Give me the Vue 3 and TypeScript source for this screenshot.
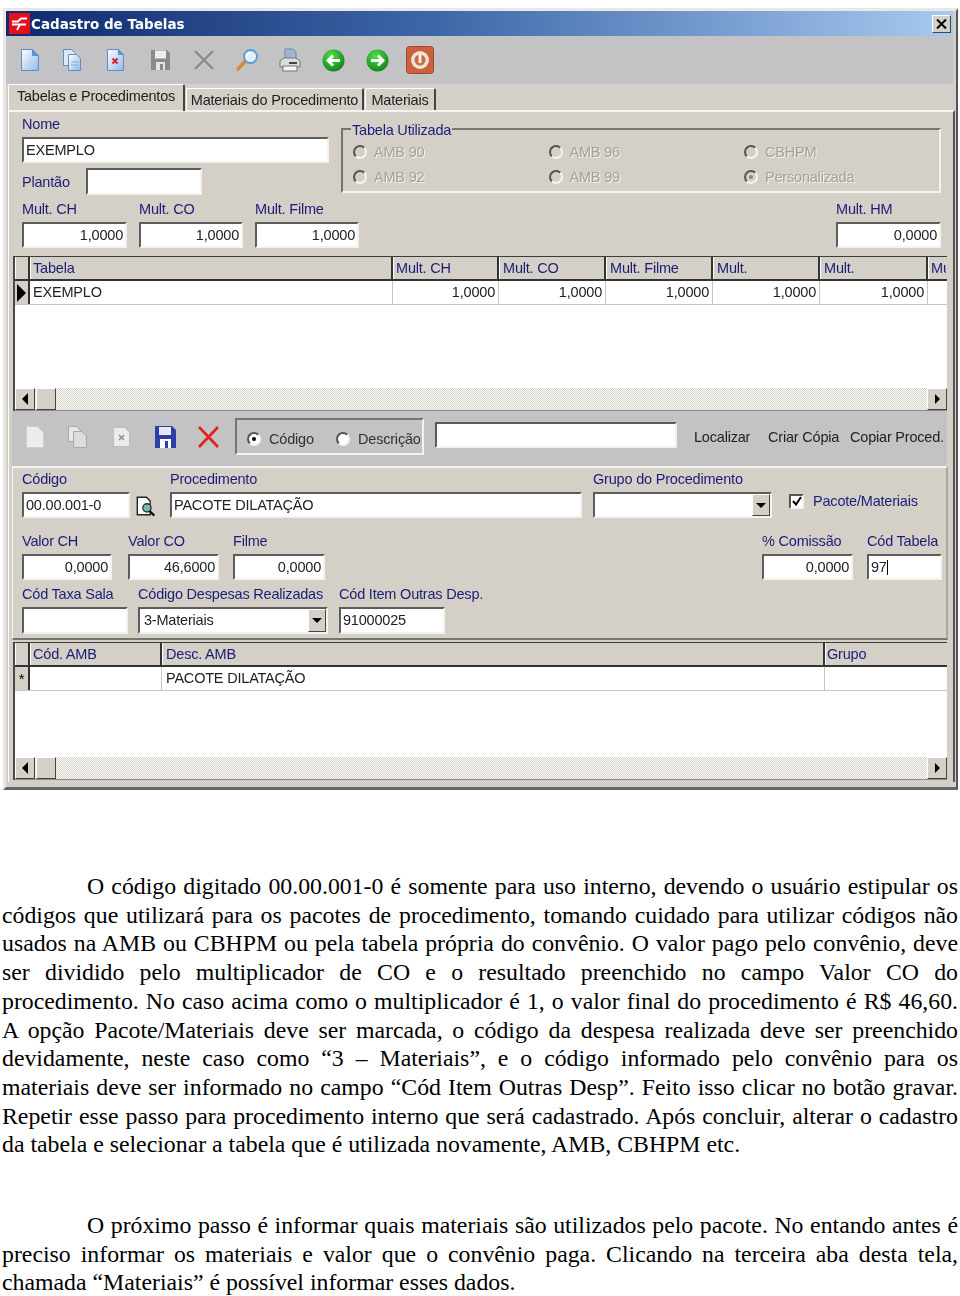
<script setup lang="ts">
// data for the two grids and the manual text below the window
const multCols = ["Mult. CH", "Mult. CO", "Mult. Filme", "Mult.", "Mult."];

const radios = [
  { label: "AMB 90", on: false },
  { label: "AMB 96", on: false },
  { label: "CBHPM", on: false },
  { label: "AMB 92", on: false },
  { label: "AMB 99", on: false },
  { label: "Personalizada", on: true },
];

const firstParagraph = [
  "O código digitado 00.00.001-0 é somente para uso interno, devendo o usuário estipular os",
  "códigos que utilizará para os pacotes de procedimento, tomando cuidado para utilizar códigos não",
  "usados na AMB ou CBHPM ou pela tabela própria do convênio. O valor pago pelo convênio, deve",
  "ser dividido pelo multiplicador de CO e o resultado preenchido no campo Valor CO do",
  "procedimento. No caso acima como o multiplicador é 1, o valor final do procedimento é R$ 46,60.",
  "A opção Pacote/Materiais deve ser marcada, o código da despesa realizada deve ser preenchido",
  "devidamente, neste caso como “3 – Materiais”, e o código informado pelo convênio para os",
  "materiais deve ser informado no campo “Cód Item Outras Desp”. Feito isso clicar no botão gravar.",
  "Repetir esse passo para procedimento interno que será cadastrado. Após concluir, alterar o cadastro",
  "da tabela e selecionar a tabela que é utilizada novamente, AMB, CBHPM etc.",
];

const secondParagraph = [
  "O próximo passo é informar quais materiais são utilizados pelo pacote. No entando antes é",
  "preciso informar os materiais e valor que o convênio paga. Clicando na terceira aba desta tela,",
  "chamada “Materiais” é possível informar esses dados.",
];
</script>

<template>
  <div class="page">
    <div class="window">
      <div class="titlebar">
        <span class="app-icon">
          <svg width="21" height="21" viewBox="0 0 21 21">
            <rect width="21" height="21" fill="#e0101c" />
            <path d="M3 8.5h6l3-3h6M3 11.5h14M8 17l3-5.500" fill="none" stroke="#fff" stroke-width="1.800" />
          </svg>
        </span>
        <span class="title">Cadastro de Tabelas</span>
        <span class="close">
          <svg width="11" height="10" viewBox="0 0 11 10"><path d="M1 .5l9 9M10 .5l-9 9" stroke="#000" stroke-width="2" /></svg>
        </span>
      </div>

      <div class="toolbar top-tools">
        <svg class="ic i1" width="20" height="24" viewBox="0 0 20 24">
          <defs>
            <linearGradient id="pg" x1="0" y1="0" x2="1" y2="1"><stop offset="0" stop-color="#fff" /><stop offset="1" stop-color="#8fb8ea" /></linearGradient>
          </defs>
          <path d="M1.500 1.500h11l6 6v15h-17z" fill="url(#pg)" stroke="#5f8ccb" />
          <path d="M12.500 1.500v6h6" fill="#5d93d8" stroke="#5f8ccb" />
        </svg>
        <svg class="ic i2" width="20" height="24" viewBox="0 0 20 24">
          <path d="M1.500 1.500h8l4 4v12h-12z" fill="#dbe8f8" stroke="#5f8ccb" />
          <path d="M6.500 6.500h8l4 4v12h-12z" fill="url(#pg)" stroke="#5f8ccb" />
          <path d="M9 14h7M9 17h7" stroke="#88a9d6" />
        </svg>
        <svg class="ic i3" width="19" height="24" viewBox="0 0 19 24">
          <path d="M1.500 1.500h11l5 5v16h-16z" fill="url(#pg)" stroke="#5f8ccb" />
          <path d="M12.500 1.500v5h5" fill="#5d93d8" stroke="#5f8ccb" />
          <path d="M6.500 10.500l5 5M11.500 10.500l-5 5" stroke="#d8202c" stroke-width="2" />
        </svg>
        <svg class="ic i4" width="21" height="22" viewBox="0 0 21 22">
          <path d="M1 1h16l3 3v17H1z" fill="#8a8a8c" />
          <rect x="5" y="1.500" width="11" height="8" fill="#ececec" />
          <rect x="6" y="13" width="9" height="8" fill="#e4e4e4" />
          <rect x="10" y="15" width="3" height="6" fill="#8a8a8c" />
        </svg>
        <svg class="ic i5" width="22" height="22" viewBox="0 0 22 22">
          <path d="M2 2l18 18M20 2L2 20" stroke="#8b8b8d" stroke-width="2.400" />
        </svg>
        <svg class="ic i6" width="24" height="24" viewBox="0 0 24 24">
          <path d="M3 21l7-7.500" stroke="#d98a32" stroke-width="3.500" stroke-linecap="round" />
          <circle cx="15.500" cy="8.500" r="6.500" fill="#dff0fb" stroke="#5a9ad6" stroke-width="1.800" />
          <path d="M12 8.500a3.500 3.500 0 0 1 3.500-3.500" stroke="#fff" stroke-width="2" fill="none" />
        </svg>
        <svg class="ic i7" width="22" height="24" viewBox="0 0 22 24">
          <path d="M6 1h8l3 3v8H6z" fill="#9fb6d3" stroke="#74879e" />
          <path d="M1 13l4-3h12l4 3v6H1z" fill="#dcdcde" stroke="#77777b" />
          <rect x="4" y="18" width="14" height="5" fill="#f5f5f5" stroke="#77777b" />
          <rect x="10" y="14" width="8" height="2" fill="#444" />
        </svg>
        <svg class="ic i8" width="23" height="23" viewBox="0 0 23 23">
          <defs>
            <radialGradient id="gr" cx=".4" cy=".3" r=".8"><stop offset="0" stop-color="#4fe04a" /><stop offset="1" stop-color="#0a7a12" /></radialGradient>
          </defs>
          <circle cx="11.500" cy="11.500" r="11" fill="url(#gr)" />
          <path d="M18 11.500H6.500M11 6.500l-5 5 5 5" fill="none" stroke="#fff" stroke-width="2.800" />
        </svg>
        <svg class="ic i9" width="23" height="23" viewBox="0 0 23 23">
          <circle cx="11.500" cy="11.500" r="11" fill="url(#gr)" />
          <path d="M5 11.500h11.500M12 6.500l5 5-5 5" fill="none" stroke="#fff" stroke-width="2.800" />
        </svg>
        <svg class="ic i10" width="28" height="28" viewBox="0 0 28 28">
          <rect x=".5" y=".5" width="27" height="27" rx="3" fill="#c9623a" stroke="#9a4a2c" />
          <circle cx="14" cy="14" r="9" fill="#f0e3da" />
          <circle cx="14" cy="14" r="5.500" fill="#cf6a3f" />
          <rect x="12.500" y="8" width="3" height="9" fill="#f6efe9" />
        </svg>
      </div>

      <div class="tabs">
        <span class="tab active">Tabelas e Procedimentos</span>
        <span class="tab t2">Materiais do Procedimento</span>
        <span class="tab t3">Materiais</span>
      </div>

      <div class="tab-page">
        <section class="form-top">
          <div class="top-block">
            <div class="name-col">
              <div class="field">
                <span class="lbl">Nome</span>
                <span class="input w307">EXEMPLO</span>
              </div>
              <div class="plantao">
                <span class="lbl plantao-lbl">Plantão</span>
                <span class="input w116 tall"></span>
              </div>
            </div>
            <div class="group">
              <span class="legend">Tabela Utilizada</span>
              <div v-for="r in radios" :key="r.label" class="radio-item">
                <span class="radio" :class="{ dot: r.on }"></span>
                <span class="disabled">{{ r.label }}</span>
              </div>
            </div>
          </div>
          <div class="row">
            <div class="field"><span class="lbl">Mult. CH</span><span class="input num w105">1,0000</span></div>
            <div class="field m-co"><span class="lbl">Mult. CO</span><span class="input num w104">1,0000</span></div>
            <div class="field m-film"><span class="lbl">Mult. Filme</span><span class="input num w104">1,0000</span></div>
            <div class="field push"><span class="lbl">Mult. HM</span><span class="input num w105">0,0000</span></div>
          </div>
        </section>

        <section class="grid grid-one">
          <div class="grid-row head">
            <span class="cell ind"></span>
            <span class="cell name">Tabela</span>
            <span v-for="(c, i) in multCols" :key="i" class="cell col" :class="'c' + i">{{ c }}</span>
            <span class="cell last">Mult.</span>
          </div>
          <div class="grid-row body">
            <span class="cell ind"><i class="arrow"></i></span>
            <span class="cell name">EXEMPLO</span>
            <span v-for="(c, i) in multCols" :key="i" class="cell col right" :class="'c' + i">1,0000</span>
            <span class="cell last"></span>
          </div>
          <div class="grid-fill"></div>
          <div class="scroll">
            <span class="sbtn"><i class="tri left"></i></span>
            <span class="thumb"></span>
            <span class="track"></span>
            <span class="sbtn end"><i class="tri right"></i></span>
          </div>
        </section>

        <div class="toolbar tools-two">
          <svg class="ic d1" width="18" height="22" viewBox="0 0 18 22">
            <path d="M.5.500h11l6 6v15H.5z" fill="#ececec" stroke="#cfcfcf" />
          </svg>
          <svg class="ic d2" width="19" height="22" viewBox="0 0 19 22">
            <path d="M.5.500h8l4 4v11H.5z" fill="#e8e8e8" stroke="#a8a8a8" />
            <path d="M5.500 5.500h8l5 4v12h-13z" fill="#dcdcdc" stroke="#a8a8a8" />
          </svg>
          <svg class="ic d3" width="17" height="20" viewBox="0 0 17 20">
            <path d="M.5.500h11l5 5v14H.5z" fill="#ececec" stroke="#bcbcbc" />
            <path d="M6 8l5 5M11 8l-5 5" stroke="#8c8c8c" stroke-width="1.500" />
          </svg>
          <svg class="ic d4" width="21" height="22" viewBox="0 0 21 22">
            <path d="M0 0h17l4 4v18H0z" fill="#2c3fa8" />
            <rect x="4" y="1" width="12" height="8" fill="#e8e8f2" />
            <rect x="5" y="13" width="11" height="9" fill="#fff" />
            <rect x="10" y="15" width="3" height="7" fill="#2c3fa8" />
          </svg>
          <svg class="ic d5" width="23" height="22" viewBox="0 0 23 22">
            <path d="M2 1l19 20M21 1L2 21" stroke="#e2201c" stroke-width="2.600" />
          </svg>
          <div class="search-by">
            <span class="radio white dot black"></span><span class="by b1">Código</span>
            <span class="radio white"></span><span class="by">Descrição</span>
          </div>
          <span class="input find"></span>
          <span class="tool-link l1">Localizar</span>
          <span class="tool-link l2">Criar Cópia</span>
          <span class="tool-link l3">Copiar Proced.</span>
        </div>

        <section class="form-low">
          <div class="row">
            <div class="field"><span class="lbl">Código</span><span class="input w108">00.00.001-0</span></div>
            <svg class="lookup" width="22" height="22" viewBox="0 0 24 24">
              <path d="M2.500 2.500h10l4 4v15h-14z" fill="#fff" stroke="#222" stroke-width="1.500" />
              <circle cx="13" cy="14" r="4.500" fill="#7fb7b0" stroke="#1c3c3c" stroke-width="1.500" />
              <path d="M16 17.500l5 5" stroke="#111" stroke-width="2.500" />
            </svg>
            <div class="field proc"><span class="lbl">Procedimento</span><span class="input w412">PACOTE DILATAÇÃO</span></div>
            <div class="field grp">
              <span class="lbl">Grupo do Procedimento</span>
              <span class="input select w179"><span class="drop"><i class="tri down"></i></span></span>
            </div>
            <div class="check-wrap">
              <span class="check">
                <svg width="10" height="10" viewBox="0 0 10 10"><path d="M1 5l3 3.500L9 1" fill="none" stroke="#000" stroke-width="2" /></svg>
              </span>
              <span class="lbl inline">Pacote/Materiais</span>
            </div>
          </div>
          <div class="row low-two">
            <div class="field"><span class="lbl">Valor CH</span><span class="input num w90">0,0000</span></div>
            <div class="field f-co"><span class="lbl">Valor CO</span><span class="input num w91">46,6000</span></div>
            <div class="field f-film"><span class="lbl">Filme</span><span class="input num w92">0,0000</span></div>
            <div class="field push"><span class="lbl">% Comissão</span><span class="input num w91">0,0000</span></div>
            <div class="field f-tab"><span class="lbl">Cód Tabela</span><span class="input w75">97<i class="caret"></i></span></div>
          </div>
          <div class="row low-three">
            <div class="field"><span class="lbl">Cód Taxa Sala</span><span class="input w106 tall"></span></div>
            <div class="field f-desp">
              <span class="lbl">Código Despesas Realizadas</span>
              <span class="input select w190 tall">3-Materiais<span class="drop"><i class="tri down"></i></span></span>
            </div>
            <div class="field f-item"><span class="lbl">Cód Item Outras Desp.</span><span class="input w106 tall">91000025</span></div>
          </div>
        </section>

        <section class="grid grid-two">
          <div class="grid-row head short">
            <span class="cell ind"></span>
            <span class="cell amb">Cód. AMB</span>
            <span class="cell desc">Desc. AMB</span>
            <span class="cell grupo">Grupo</span>
          </div>
          <div class="grid-row body">
            <span class="cell ind star">*</span>
            <span class="cell amb"></span>
            <span class="cell desc">PACOTE DILATAÇÃO</span>
            <span class="cell grupo"></span>
          </div>
          <div class="grid-fill"></div>
          <div class="scroll">
            <span class="sbtn"><i class="tri left"></i></span>
            <span class="thumb"></span>
            <span class="track"></span>
            <span class="sbtn end"><i class="tri right"></i></span>
          </div>
        </section>
      </div>
    </div>

    <div class="doc">
      <div class="para">
        <div v-for="(line, i) in firstParagraph" :key="i" class="line" :class="{ indent: i === 0, end: i === firstParagraph.length - 1 }">{{ line }}</div>
      </div>
      <div class="para second">
        <div v-for="(line, i) in secondParagraph" :key="i" class="line" :class="{ indent: i === 0, end: i === secondParagraph.length - 1 }">{{ line }}</div>
      </div>
    </div>
  </div>
</template>

<style scoped>
.page {
  width: 960px;
  height: 1296px;
  overflow: hidden;
  background: #fff;
  padding-top: 8px;
  box-sizing: border-box;
}

.window {
  width: 955px;
  height: 782px;
  margin-left: 3px;
  box-sizing: border-box;
  background: #d4d0c8;
  border-top: 3px solid #e9e8e4;
  border-left: 3px solid #e9e8e4;
  border-right: 2px solid #555;
  border-bottom: 3px solid #666;
  font-family: "Liberation Sans", Arial, sans-serif;
  font-size: 14.500px;
  letter-spacing: -0.2px;
  color: #222;
  filter: blur(0.4px);
}

.titlebar {
  height: 25px;
  display: flex;
  align-items: center;
  background: linear-gradient(90deg, #0f2a6e 0%, #3d66a8 45%, #a6caf0 100%);
  margin-right: 3px;
}
.app-icon {
  display: flex;
  margin-left: 3px;
}
.title {
  margin-left: 1px;
  color: #fff;
  font-family: "DejaVu Sans", sans-serif;
  font-weight: bold;
  font-size: 13.500px;
  letter-spacing: 0;
}
.close {
  margin-left: auto;
  margin-right: 2px;
  width: 19px;
  height: 18px;
  box-sizing: border-box;
  display: flex;
  align-items: center;
  justify-content: center;
  background: #d4d0c8;
  border: 1px solid;
  border-color: #fff #444 #444 #fff;
}

.toolbar {
  position: relative;
  background: #c3c2c4;
}
.top-tools {
  height: 48px;
  margin-right: 3px;
  display: flex;
  align-items: center;
}
.ic {
  flex: none;
}
.i1 { margin-left: 14px; }
.i2 { margin-left: 22px; }
.i3 { margin-left: 24px; }
.i4 { margin-left: 25px; }
.i5 { margin-left: 22px; }
.i6 { margin-left: 20px; }
.i7 { margin-left: 20px; }
.i8 { margin-left: 21px; }
.i9 { margin-left: 21px; }
.i10 { margin-left: 17px; }

.tabs {
  height: 26px;
  display: flex;
  align-items: flex-end;
  padding-left: 2px;
}
.tab {
  height: 22px;
  line-height: 22px;
  box-sizing: border-box;
  border-top: 1px solid #fff;
  border-left: 1px solid #fff;
  border-right: 2px solid #444;
  border-top-left-radius: 2px;
  border-top-right-radius: 2px;
  margin-right: 1px;
  text-align: center;
  white-space: nowrap;
}
.tab.active {
  width: 177px;
  height: 27px;
  line-height: 23px;
  margin-bottom: -1px;
  position: relative;
}
.t2 { width: 178px; }
.t3 { width: 71px; }

.tab-page {
  height: 672px;
  margin-left: 2px;
  margin-right: 1px;
  box-sizing: border-box;
  border-top: 2px solid #f4f3f0;
  border-left: 1px solid #fff;
  border-right: 2px solid #555;
  padding-left: 3px;
}

.form-top {
  height: 144px;
  padding-left: 10px;
  box-sizing: border-box;
  padding-top: 4px;
  width: 929px;
}
.top-block {
  display: flex;
  height: 85px;
}
.name-col {
  width: 319px;
  flex: none;
}
.field {
  display: flex;
  flex-direction: column;
  flex: none;
}
.lbl {
  height: 16px;
  line-height: 16px;
  margin-bottom: 5px;
  color: #1c1c78;
  white-space: nowrap;
}
.lbl.inline {
  margin: 0;
}
.input {
  position: relative;
  height: 26px;
  line-height: 22px;
  box-sizing: border-box;
  background: #fff;
  border: 2px solid;
  border-color: #5c5c5c #f3f2ef #f3f2ef #5c5c5c;
  padding: 0 2px;
  color: #222;
  white-space: nowrap;
  display: block;
}
.input.tall {
  height: 27px;
}
.num {
  text-align: right;
}
.w75 { width: 75px; }
.w90 { width: 90px; }
.w91 { width: 91px; }
.w92 { width: 92px; }
.w104 { width: 104px; }
.w105 { width: 105px; }
.w106 { width: 106px; }
.w108 { width: 108px; }
.w116 { width: 116px; }
.w179 { width: 179px; }
.w190 { width: 190px; }
.w307 { width: 307px; }
.w412 { width: 412px; }

.plantao {
  display: flex;
  align-items: center;
  margin-top: 5px;
}
.plantao-lbl {
  width: 64px;
  margin: 0;
}

.group {
  position: relative;
  flex: none;
  width: 600px;
  height: 65px;
  margin-top: 12px;
  box-sizing: border-box;
  border: 2px solid;
  border-color: #77756f #f3f2ef #f3f2ef #77756f;
  display: grid;
  grid-template-columns: repeat(3, 195.500px);
  grid-auto-rows: 25px;
  padding: 9px 0 0 10px;
}
.legend {
  position: absolute;
  left: 8px;
  top: -8px;
  padding: 0 1px;
  background: #d4d0c8;
  color: #1c1c78;
  line-height: 16px;
}
.radio-item {
  display: flex;
  align-items: center;
  gap: 7px;
}
.radio {
  flex: none;
  display: inline-block;
  position: relative;
  width: 14px;
  height: 14px;
  box-sizing: border-box;
  border-radius: 50%;
  border: 2px solid;
  border-color: #55534e #f5f4f2 #f5f4f2 #55534e;
  background: #d4d0c8;
}
.radio.white {
  background: #fff;
}
.radio.dot::after {
  content: "";
  position: absolute;
  left: 3px;
  top: 3px;
  width: 4px;
  height: 4px;
  border-radius: 50%;
  background: #8a8880;
}
.radio.black::after {
  background: #000;
}
.disabled {
  color: #a3a19b;
  text-shadow: 1px 1px 0 #f4f3f0;
}

.row {
  display: flex;
}
.push {
  margin-left: auto;
}
.m-co { margin-left: 12px; }
.m-film { margin-left: 12px; }

.grid {
  width: 934px;
  margin-left: 1px;
  box-sizing: border-box;
  background: #fff;
  border-top: 1px solid #3c3c3c;
  border-left: 2px solid #4a4a4a;
  display: flex;
  flex-direction: column;
}
.grid-one {
  height: 155px;
  margin-top: 0;
}
.grid-two {
  height: 138px;
  margin-top: 2px;
}
.grid-row {
  display: flex;
  flex: none;
}
.head {
  height: 24px;
  background: #d4d0c8;
  border-bottom: 2px solid #333;
  box-sizing: border-box;
  color: #1c1c78;
}
.head.short {
  height: 24px;
}
.body {
  height: 24px;
  box-sizing: border-box;
  border-bottom: 1px solid #c8c6c0;
}
.cell {
  flex: none;
  box-sizing: border-box;
  height: 100%;
  line-height: 22px;
  padding: 0 2px 0 3px;
  border-right: 1px solid #c9c7c1;
  white-space: nowrap;
  overflow: hidden;
}
.head .cell {
  border-right: 2px solid #333;
  box-shadow: inset 1px 0 0 #fff;
}
.cell.ind {
  width: 15px;
  padding: 0;
  background: #d4d0c8;
  border-right: 2px solid #333;
  display: flex;
  align-items: center;
  justify-content: center;
}
.cell.name { width: 363px; }
.cell.col { width: 107px; padding-left: 4px; }
.c0 { width: 106px !important; padding-left: 3px !important; }
.c4 { width: 108px !important; }
.cell.last { width: 18px; padding-right: 0; border-right: 0; }
.cell.right { text-align: right; padding-right: 3px; }
.cell.amb { width: 132px; }
.cell.desc { width: 663px; padding-left: 4px; }
.cell.grupo { width: 122px; border-right: 0; padding-left: 2px; }
.arrow {
  width: 0;
  height: 0;
  border-left: 9px solid #000;
  border-top: 9px solid transparent;
  border-bottom: 9px solid transparent;
}
.star {
  font-size: 15px;
  line-height: 22px;
  color: #000;
}
.grid-fill {
  flex: 1;
}
.scroll {
  flex: none;
  height: 22px;
  display: flex;
  background: repeating-conic-gradient(#d4d0c8 0 25%, #fff 0 50%) 0 0 / 2px 2px;
  border-bottom: 1px solid #8c8a84;
  box-sizing: content-box;
}
.sbtn,
.thumb {
  flex: none;
  height: 22px;
  box-sizing: border-box;
  background: #d4d0c8;
  border: 1px solid;
  border-color: #fff #444 #444 #fff;
  display: flex;
  align-items: center;
  justify-content: center;
}
.sbtn {
  width: 20px;
}
.thumb {
  width: 20px;
  margin-left: 1px;
}
.track {
  flex: 1;
}
.sbtn.end {
  margin-right: 0;
}
.tri {
  width: 0;
  height: 0;
  display: block;
}
.tri.left {
  border-right: 6px solid #000;
  border-top: 6px solid transparent;
  border-bottom: 6px solid transparent;
}
.tri.right {
  border-left: 5px solid #000;
  border-top: 5px solid transparent;
  border-bottom: 5px solid transparent;
}
.tri.down {
  border-top: 5px solid #000;
  border-left: 5px solid transparent;
  border-right: 5px solid transparent;
}

.tools-two {
  width: 935px;
  height: 55px;
  box-sizing: border-box;
  padding-bottom: 4px;
  display: flex;
  align-items: center;
}
.d1 { margin-left: 14px; }
.d2 { margin-left: 24px; }
.d3 { margin-left: 26px; }
.d4 { margin-left: 25px; }
.d5 { margin-left: 21px; }
.search-by {
  margin-left: 15px;
  width: 189px;
  height: 37px;
  flex: none;
  box-sizing: border-box;
  border: 2px solid;
  border-color: #77756f #f3f2ef #f3f2ef #77756f;
  display: flex;
  align-items: center;
  padding: 4px 0 0 10px;
  color: #333;
}
.by { margin-left: 8px; }
.by.b1 { width: 58px; margin-right: 9px; flex: none; }
.find {
  width: 242px;
  flex: none;
  margin-left: 11px;
  margin-bottom: 4px;
}
.tool-link {
  flex: none;
  white-space: nowrap;
}
.l1 { margin-left: 17px; width: 74px; }
.l2 { width: 82px; }
.l3 { flex: none; }

.form-low {
  width: 936px;
  height: 174px;
  box-sizing: border-box;
  background: #d4d0c8;
  border-top: 2px solid #f4f3f0;
  border-right: 2px solid #aaa8a2;
  border-bottom: 2px solid #77756f;
  border-left: 1px solid #f4f3f0;
  padding: 3px 4px 0 9px;
}
.lookup {
  flex: none;
  margin: 24px 0 0 5px;
}
.proc { margin-left: 13px; }
.grp { margin-left: 11px; }
.select {
  padding-left: 4px;
}
.drop {
  position: absolute;
  right: 0;
  top: 0;
  bottom: 0;
  width: 18px;
  background: #d4d0c8;
  border: 1px solid;
  border-color: #fff #444 #444 #fff;
  box-sizing: border-box;
  display: flex;
  align-items: center;
  justify-content: center;
}
.check-wrap {
  display: flex;
  align-items: center;
  gap: 9px;
  margin: 21px 0 0 17px;
  height: 18px;
}
.check {
  width: 15px;
  height: 15px;
  box-sizing: border-box;
  background: #fff;
  border: 2px solid;
  border-color: #555 #f3f2ef #f3f2ef #555;
  display: flex;
  align-items: center;
  justify-content: center;
}
.low-two {
  margin-top: 15px;
}
.f-co { margin-left: 16px; }
.f-film { margin-left: 14px; }
.f-tab { margin-left: 14px; }
.low-three {
  margin-top: 6px;
}
.f-desp { margin-left: 10px; }
.f-item { margin-left: 11px; }
.caret {
  display: inline-block;
  width: 1px;
  height: 15px;
  background: #000;
  vertical-align: -3px;
}

.doc {
  margin-top: 82px;
  padding: 0 2px;
  font-family: "Liberation Serif", "Times New Roman", serif;
  font-size: 23.800px;
  line-height: 28.700px;
  color: #000;
}
.para.second {
  margin-top: 52px;
}
.line {
  text-align: justify;
  text-align-last: justify;
  white-space: normal;
}
.line.indent {
  text-indent: 85px;
}
.line.end {
  text-align-last: left;
}
</style>
